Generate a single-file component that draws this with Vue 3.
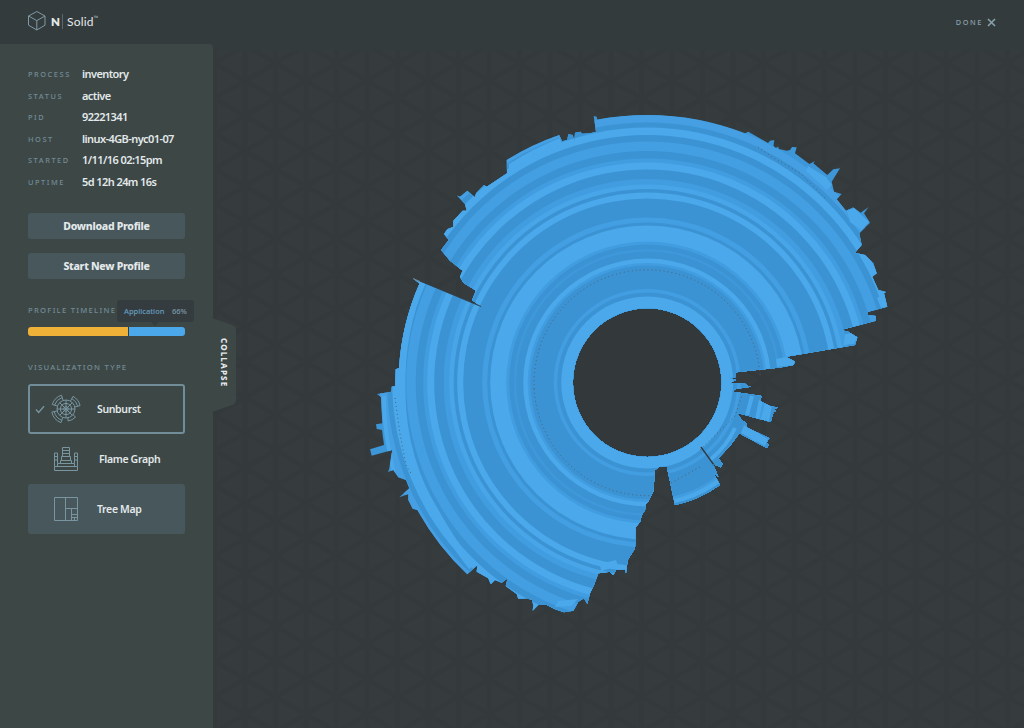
<script setup>
const info = [
  ['PROCESS', 'inventory'],
  ['STATUS', 'active'],
  ['PID', '92221341'],
  ['HOST', 'linux-4GB-nyc01-07'],
  ['STARTED', '1/11/16 02:15pm'],
  ['UPTIME', '5d 12h 24m 16s'],
]

const L = '#4aa8eb'
const M = '#429de0'
const D = '#3b93d3'

// outer radius and colour of each ring, from the rim inwards
const rings = [
  [267.5, '#459fe2'], [260, D], [255, L], [247.5, D], [241, '#449fe2'], [231.5, D],
  [224, M], [220, L], [213, D], [203.5, M], [198, '#48a5e8'], [193.5, D],
  [190, L], [184, D], [165, '#439fe2'], [160, D], [157, L], [141, M],
  [138, D], [133.5, '#3f98d9'], [131, D], [124, L], [119.5, M], [117, D],
  [93.5, '#439ee1'], [90, D], [86, L],
]

const outline =
  'M647 115A267.5 267.5 0 0 0 597.3 119.5L596.7 116.7L593.7 116L596 131.7L590 133.3L581.7 133.7L580.7 131.7L575 132.7L574.3 140.7L572.7 135L568.3 134.3L567.3 140L562 141.3L559.3 135' +
  'A262.8 262.8 0 0 0 506.7 160L507 173.3L486.7 186.7L484 185L476 193.3L475 197.3L467.3 190.7L460 196.7L457 195.5L465 204L466.7 210.7L462.7 210.7L453.3 220.7V226.7L447.3 229.3L444 234L448.7 240L441 250L450 260.7L462.7 270.7L460 276.7L463.3 282.7L475 290V293.3L472 300L481 306.5L420 281.7L413 278.5L419.5 283.5' +
  'A248 248 0 0 0 399 368L395.7 369.3L395 386L391.7 386.7L391.3 391.7L377 394L381 397L382.3 423.3L376 424.3L376.7 429L382 430L384 445L370 449.3L371.7 455.7L392.3 450L389.3 468.3L388 472L393.3 470L398.3 477.3L406 480L409.3 488.3L399.3 497.3L408.3 494V500L412.7 508.7L417.3 510Q438 547 467.3 574.3L477.3 565.3L476.7 571.7L488.3 578.3L490.7 584.3L495 580L501.7 582.7L507.7 578.3L505.7 586L516.7 594L518.3 599L528.3 598.3L530.5 600L531.7 599.3L533.3 605L532.7 610.7L538.3 605L546.7 605L555 609.3L564 612.3L573.3 610.7L578.3 601.7L584 598.3L587.3 604L590 593.3L594 585L598.3 573.3L610 571.7L613.3 575L616 570L625 569.3L626 573.3L627.7 560L635 548.3L636 526.7L640 522L642 515L645 510L646 504L648.3 501.7L653.3 491.7L655 470L659.3 467L666.7 466L675 505Q699 500 720 485L713.3 472.7L718.3 476.7L713 464L720.7 467.3L722.7 464L718.3 458.3L730 446L739.3 433.3L766.7 448L769 445L766.5 442.7L769.3 438.3L746.7 427.3V423.3L741.7 420L736.7 412.7L770.7 422L773.3 412.7L771 412L776 411L773 409L778.3 407.7L770 406L764 403L760 400.7L761.7 396L732.7 391.7L735 389.3L742 388L750.7 386.7L744 385L746.7 384L730 383.3L736 380L729.3 378L736 377V372.3L756.7 370L780 367.5L793.3 365L795 361.7L786 356.7L830 349.3L855 345L857.3 337.3L848.3 331.7L840.7 330L876 320.7V316L867.3 315V312L887.3 306.7L884 293.3L886 292L878.3 290L872.3 276.7L876.7 273.3L873.3 263.3L865 255L855 252.7L861.7 245L859.3 233.3L870 222.7L864 213.3L868.5 207L860.7 212.7L853.3 207.3L846 210.7L836.7 199.3L841.7 194L834 191.7L831.7 181.7L840 168.3L833.3 169.3L827.3 175L813.3 163.3L815 161L809.3 164L795 153.3L796.7 147.3L792 147L790 150L786.7 150.7L779 149L778 146.5L776 148L773.5 146L774.3 140L770 140.7L768 143L748.3 131.7L745 133.3A267.5 267.5 0 0 0 647 115Z' +
  'M647.2 308.3A74.3 74.3 0 1 0 647.2 456.9A74.3 74.3 0 1 0 647.2 308.3Z'
</script>

<template>
  <div class="app">
    <header class="top">
      <div class="brand">
        <svg class="cube" width="20" height="22" viewBox="0 0 20 22">
          <path d="M9.8 1.5L18 6V15.2L9.8 20L1.5 15.2V6ZM1.5 6L9.8 10.6L18 6M9.8 10.6V20" />
        </svg>
        <b>N</b><i class="bar"></i><span class="solid">Solid</span><sup>™</sup>
      </div>
      <div class="done">
        <span>DONE</span>
        <svg width="9" height="9" viewBox="0 0 9 9"><path d="M1 1L8 8M8 1L1 8" /></svg>
      </div>
    </header>

    <div class="main">
      <aside class="panel">
        <dl class="info">
          <div v-for="r in info" :key="r[0]" class="row">
            <dt>{{ r[0] }}</dt>
            <dd>{{ r[1] }}</dd>
          </div>
        </dl>

        <div class="buttons">
          <button>Download Profile</button>
          <button>Start New Profile</button>
        </div>

        <section class="timeline">
          <h2>PROFILE TIMELINE</h2>
          <div class="track"><i class="a"></i><i class="b"></i></div>
          <div class="tip"><span>Application</span><span>66%</span></div>
        </section>

        <section class="types">
          <h2>VISUALIZATION TYPE</h2>
          <div class="type selected">
            <svg class="check" width="10" height="9" viewBox="0 0 10 9"><path d="M1 4.5L3.7 7.5L9 1.2" /></svg>
            <svg class="icon" width="30" height="30" viewBox="-15 -15 30 30">
              <circle r="9" /><circle r="5.6" /><circle r="2.3" />
              <path d="M-9 0H9M0 -9V9M-6.3 -6.3L6.3 6.3M6.3 -6.3L-6.3 6.3" />
              <path d="M-13.8 -4.5A14.5 14.5 0 0 1 -4.5 -13.8L-3 -9M-13.8 -4.5L-8.5 -3M-11.5 -3.8A12 12 0 0 1 -3.8 -11.5" />
              <path d="M7 -12.7A14.5 14.5 0 0 1 14.1 -3.4L9 -2M7 -12.7L4.5 -8M5.8 -10.5A12 12 0 0 1 11.7 -2.8" />
              <path d="M-14.2 3A14.5 14.5 0 0 0 -5 13.6L-3.2 8.5M-14.2 3L-9 2M-11.8 2.5A12 12 0 0 0 -4.1 11.3" />
              <path d="M2 12A12.3 12.3 0 0 0 9.5 8L6.8 5.5M2 12V9" />
            </svg>
            <span>Sunburst</span>
          </div>
          <div class="type flame">
            <svg class="icon" width="26" height="26" viewBox="0 0 26 26">
              <path d="M1.5 24.5H24.5V20.5H1.5ZM1.5 20.5V7H4.5V17.5H21.5V7H24.5V20.5M4.5 17.5V20.5M21.5 17.5V20.5M1.5 10.5H4.5M1.5 14H4.5M21.5 10.5H24.5M21.5 14H24.5" />
              <path d="M7.5 17.5V14.5H18.5V17.5M8.5 14.5V10.5H17.5V14.5M9.5 10.5V1.5H16.5V10.5M9.5 4.5H16.5M9.5 7.5H16.5" />
            </svg>
            <span>Flame Graph</span>
          </div>
          <div class="type filled">
            <svg class="icon" width="26" height="26" viewBox="0 0 26 26">
              <path d="M1.5 1.5H24.5V24.5H1.5ZM12.5 1.5V24.5M12.5 12.5H24.5M18.5 12.5V24.5M18.5 18.5H24.5M18.5 21.5H24.5M21.5 21.5V24.5" />
            </svg>
            <span>Tree Map</span>
          </div>
        </section>

        <div class="collapse">
          <svg width="24" height="96" viewBox="0 0 24 96">
            <path d="M0 0L20 7Q24 8.500 24 12V82Q24 85.500 20 87L0 94Z" />
          </svg>
          <span>COLLAPSE</span>
        </div>
      </aside>

      <main class="stage">
        <svg width="811" height="684" viewBox="213 44 811 684">
          <defs>
            <pattern id="tri" x="855" y="573.500" width="61" height="35.200" patternUnits="userSpaceOnUse">
              <rect width="61" height="35.200" fill="#363c3e" />
              <path d="M0 0L61 35.200M61 0L0 35.200M0 -5V40M30.500 -5V40M61 -5V40" stroke="#343a3c" stroke-width="5" />
            </pattern>
            <clipPath id="shape"><path :d="outline" clip-rule="evenodd" /></clipPath>
          </defs>
          <rect x="213" y="50" width="811" height="678" fill="url(#tri)" />
          <circle cx="647.200" cy="382.600" r="74.500" fill="#33393b" />
          <g clip-path="url(#shape)">
            <rect x="360" y="100" width="540" height="530" fill="#3d96d7" />
            <circle v-for="r in rings" :key="r[0]" cx="647.200" cy="382.500" :r="r[0]" :fill="r[1]" />
            <g fill="none" stroke="#4aa8eb">
              <path d="M423 281C407 315 401 350 402 392" stroke-width="7" />
              <path d="M402 392C402 440 417 482 434 509Q450 539 472 567" stroke-width="7" />
              <path d="M384 396Q384 424 389 450L394 474" stroke-width="4" />
              <path d="M752 396L747 415M761 400L757 419M770 405L767 422" stroke-width="4" />
              <path d="M735 428Q727 446 710 460" stroke-width="4" />
            </g>
            <g fill="#4aa8eb">
              <path d="M509 164Q534 148 560 138L562 144Q535 155 509 171Z" />
              <path d="M776 359L786 357L793 361L791 365L777 367Z" />
              <path d="M845 334L852 333L857 338L854 344L844 345Z" />
              <path d="M847 211L854 208L869 222L861 230L850 222Z" />
              <path d="M808 166L826 177L832 185L827 190L806 171Z" />
              <path d="M877 298L884 294L887 306L881 308Z" />
              <path d="M600 564L616 560L618 566L601 571ZM558 601L578 599L571 606L555 607Z" />
              <path d="M744 425L768 439L765 446L741 433Z" />
            </g>
            <path d="M701 447L719 472" stroke="#33393b" stroke-width="1.300" />
          </g>
          <path d="M413 278.500L420 281.500" stroke="#6f8794" />
          <path d="M420 281L481 306.500" stroke="#343f45" />
          <g fill="none" stroke="#4e6270" stroke-width="1" stroke-dasharray="1 3">
            <path d="M534.200 389A113 113 0 0 1 760.200 377" />
            <path d="M534.200 389A113 113 0 0 0 652 495.500" />
            <path d="M758 147L772 157L800 173L825 198" />
            <path d="M395 398L400 434L406 465L412 475" />
            <path d="M671 483L700 467M700 450L735 416L742 395" />
          </g>
        </svg>
      </main>
    </div>
  </div>
</template>

<style>
body { margin: 0; background: #343a3c; }
</style>

<style scoped>
.app { width: 1024px; height: 728px; display: flex; flex-direction: column; overflow: hidden; background: #343b3d; color: #e3e9ea; font-family: "Noto Sans", "Open Sans", sans-serif; }
.top { height: 44px; flex: none; display: flex; justify-content: space-between; box-sizing: border-box; padding: 0 28px 0 27px; align-items: center; }
.brand { display: flex; align-items: center; height: 22px; margin-top: -2px; }
.cube path { fill: none; stroke: #7f9aa5; stroke-width: 1; }
.brand b { font-size: 11.500px; font-family: Lato, sans-serif; font-weight: 800; width: 11px; margin-left: 4px; }
.bar { width: 1px; height: 15px; background: #59686d; }
.solid { font: 12px Lato, sans-serif; margin-left: 4px; letter-spacing: .2px; }
.brand sup { font-size: 6px; line-height: 6px; align-self: flex-start; margin-top: 5px; color: #a6b4b8; }
.done { display: flex; align-items: center; gap: 4px; font-size: 7.300px; letter-spacing: 1.600px; font-weight: 500; color: #87a0ab; }
.done path { stroke: #87a0ab; stroke-width: 1.600; }
.main { flex: 1; display: flex; min-height: 0; }
.panel { width: 213px; flex: none; box-sizing: border-box; padding: 19px 28px 0; background: #3c4746; border-top-right-radius: 4px; position: relative; z-index: 1; }
.info { margin: 0; }
.row { display: flex; align-items: center; height: 21.500px; }
dt { width: 54px; font-size: 7.400px; letter-spacing: 1.550px; color: #738b95; font-weight: 500; padding-top: 1px; }
dd { margin: 0; font-size: 11px; letter-spacing: -.58px; font-weight: 600; white-space: nowrap; }
.buttons { display: flex; flex-direction: column; gap: 14px; margin-top: 21px; }
button { height: 26px; border: 0; border-radius: 3px; background: #48575c; color: #e3e9ea; font: 800 10.500px "Noto Sans", sans-serif; letter-spacing: -.28px; padding: 0; }
h2 { margin: 0; font-size: 7.700px; line-height: 10px; letter-spacing: 1.250px; font-weight: 500; color: #738b95; white-space: nowrap; }
.timeline { position: relative; margin-top: 26px; }
.track { display: flex; gap: 1px; height: 9px; margin-top: 12px; border-radius: 3px; overflow: hidden; background: #343b3d; }
.track .a { width: 100px; background: #efb137; }
.track .b { flex: 1; background: #4aa8eb; }
.tip { position: absolute; left: 89px; top: -5px; width: 77px; height: 22px; box-sizing: border-box; padding: 0 7px; border-radius: 3px; background: #353c3f; display: flex; justify-content: space-between; align-items: center; font-size: 7.500px; font-weight: 500; color: #7c99a8; }
.tip span:first-child { color: #669fc2; }
.tip::after { content: ""; position: absolute; left: 34px; top: 22px; border: 4px solid transparent; border-top-color: #353c3f; border-bottom: 0; }
.types { margin-top: 26px; }
.types h2 { margin-bottom: 12px; }
.type { width: 157px; height: 50px; box-sizing: border-box; display: flex; align-items: center; font-size: 10.500px; font-weight: 600; letter-spacing: -.35px; padding-left: 25px; border-radius: 3px; }
.type svg { fill: none; stroke: #7895a0; stroke-width: 1; flex: none; }
.type.selected { border: 2px solid #708d99; padding-left: 5px; }
.check { stroke-width: 1.400 !important; }
.selected .icon { margin-left: 6px; }
.selected span { margin-left: 16px; }
.flame span { margin-left: 20px; }
.filled { background: #48575c; }
.filled span { margin-left: 18px; }
.collapse { position: absolute; left: 212px; top: 274px; width: 24px; height: 96px; }
.collapse svg { display: block; fill: #3c4746; }
.collapse span { position: absolute; left: 5px; top: 20px; line-height: 14px; writing-mode: vertical-rl; font-size: 8px; font-weight: 800; letter-spacing: 1.150px; }
.stage { flex: 1; }
.stage svg { display: block; }
</style>
